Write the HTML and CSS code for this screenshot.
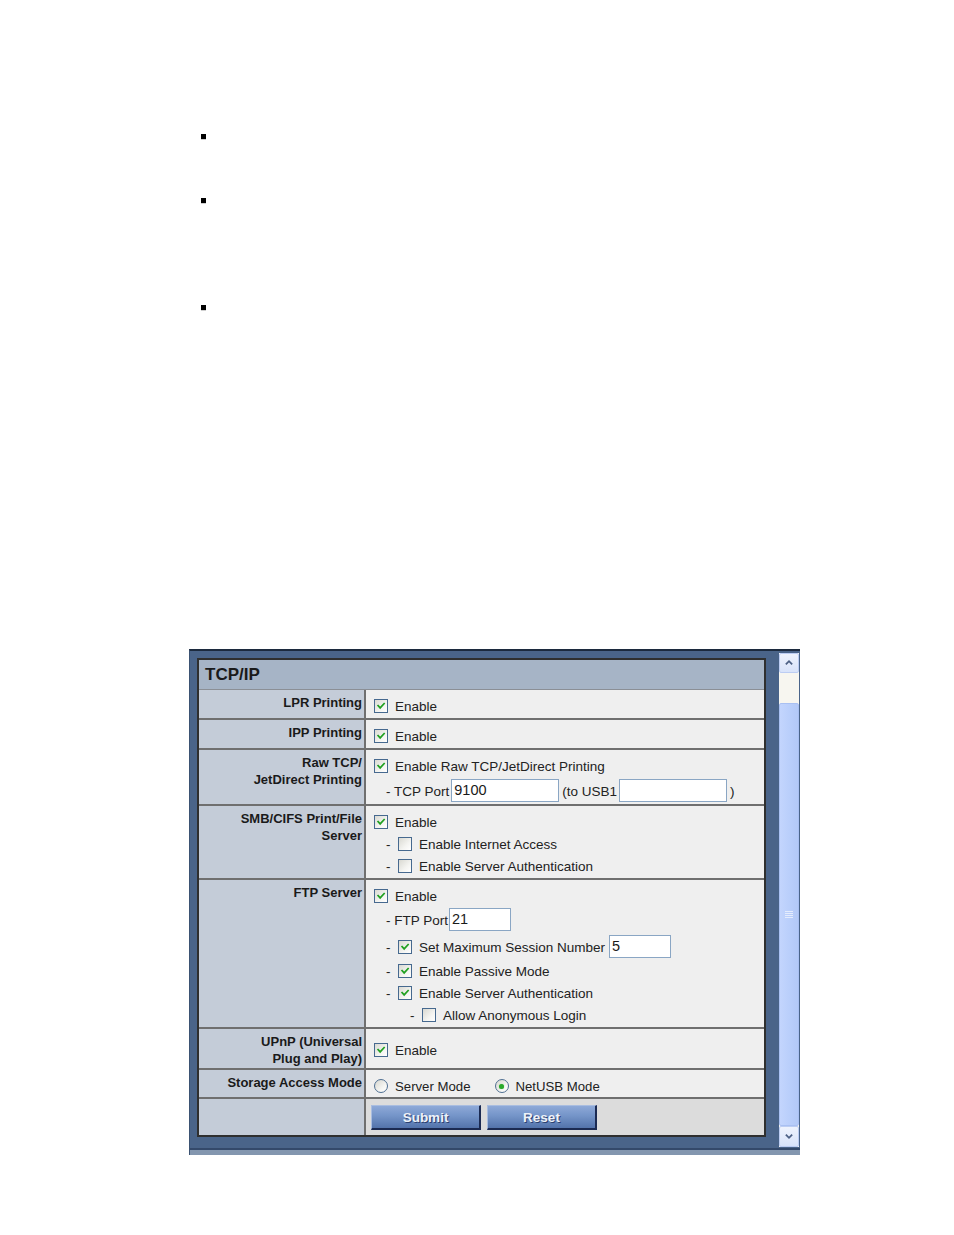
FILE: index.html
```html
<!DOCTYPE html>
<html>
<head>
<meta charset="utf-8">
<title>TCP/IP</title>
<link rel="stylesheet" href="styles.css">
</head>
<body>
<ul class="notes">
  <li class="dot"></li>
  <li class="dot d2"></li>
  <li class="dot d3"></li>
</ul>

<div class="frame">
  <div class="frame-body">
    <div class="panel">
      <div class="tbl">
        <div class="hdr">TCP/IP</div>

        <div class="lbl">LPR Printing</div>
        <div class="val">
          <div class="line"><span class="cb"><svg viewBox="0 0 14 14"><path d="M3.6 6.6 L6 9.2 L10.6 4.2"/></svg></span><span class="t">Enable</span></div>
        </div>

        <div class="lbl">IPP Printing</div>
        <div class="val">
          <div class="line"><span class="cb"><svg viewBox="0 0 14 14"><path d="M3.6 6.6 L6 9.2 L10.6 4.2"/></svg></span><span class="t">Enable</span></div>
        </div>

        <div class="lbl">Raw TCP/<br>JetDirect Printing</div>
        <div class="val">
          <div class="line"><span class="cb"><svg viewBox="0 0 14 14"><path d="M3.6 6.6 L6 9.2 L10.6 4.2"/></svg></span><span class="t">Enable Raw TCP/JetDirect Printing</span></div>
          <div class="line sub mt3"><span class="txt">- TCP Port</span><input class="fld w108" type="text" value="9100"><span class="txt after">(to USB1</span><input class="fld w108" type="text" value=""><span class="txt after">)</span></div>
        </div>

        <div class="lbl">SMB/CIFS Print/File<br>Server</div>
        <div class="val">
          <div class="line"><span class="cb"><svg viewBox="0 0 14 14"><path d="M3.6 6.6 L6 9.2 L10.6 4.2"/></svg></span><span class="t">Enable</span></div>
          <div class="line sub"><span class="dash">-</span><span class="cb off"></span><span class="t">Enable Internet Access</span></div>
          <div class="line sub"><span class="dash">-</span><span class="cb off"></span><span class="t">Enable Server Authentication</span></div>
        </div>

        <div class="lbl">FTP Server</div>
        <div class="val">
          <div class="line"><span class="cb"><svg viewBox="0 0 14 14"><path d="M3.6 6.6 L6 9.2 L10.6 4.2"/></svg></span><span class="t">Enable</span></div>
          <div class="line sub mt2"><span class="txt">- FTP Port</span><input class="fld w62 tight" type="text" value="21"></div>
          <div class="line sub mt5"><span class="dash">-</span><span class="cb"><svg viewBox="0 0 14 14"><path d="M3.6 6.6 L6 9.2 L10.6 4.2"/></svg></span><span class="t">Set Maximum Session Number</span><input class="fld w62 wide" type="text" value="5"></div>
          <div class="line sub mt2"><span class="dash">-</span><span class="cb"><svg viewBox="0 0 14 14"><path d="M3.6 6.6 L6 9.2 L10.6 4.2"/></svg></span><span class="t">Enable Passive Mode</span></div>
          <div class="line sub"><span class="dash">-</span><span class="cb"><svg viewBox="0 0 14 14"><path d="M3.6 6.6 L6 9.2 L10.6 4.2"/></svg></span><span class="t">Enable Server Authentication</span></div>
          <div class="line subsub"><span class="dash">-</span><span class="cb off"></span><span class="t">Allow Anonymous Login</span></div>
        </div>

        <div class="lbl">UPnP (Universal<br>Plug and Play)</div>
        <div class="val mid">
          <div class="line"><span class="cb"><svg viewBox="0 0 14 14"><path d="M3.6 6.6 L6 9.2 L10.6 4.2"/></svg></span><span class="t">Enable</span></div>
        </div>

        <div class="lbl">Storage Access Mode</div>
        <div class="val">
          <div class="line radios"><span class="rb"></span><span class="t">Server Mode</span><span class="rb on second"><span class="pip"></span></span><span class="t">NetUSB Mode</span></div>
        </div>

        <div class="lbl last"></div>
        <div class="val last btns">
          <button class="btn" type="button">Submit</button>
          <button class="btn" type="button">Reset</button>
        </div>
      </div>
    </div>

    <div class="scrollbar">
      <div class="sb-btn"><svg viewBox="0 0 20 20"><path d="M6.5 11.5 L10 8 L13.5 11.5"/></svg></div>
      <div class="sb-track"></div>
      <div class="sb-thumb"><svg class="grip" viewBox="0 0 8 7"><path d="M0 0.5 H8 M0 2.5 H8 M0 4.5 H8 M0 6.5 H8"/></svg></div>
      <div class="sb-btn down"><svg viewBox="0 0 20 20"><path d="M6.5 8.5 L10 12 L13.5 8.5"/></svg></div>
    </div>
  </div>
  <div class="frame-foot"></div>
</div>
</body>
</html>
```

FILE: styles.css
```css
html, body {
  margin: 0;
  padding: 0;
  background: #ffffff;
}

body {
  font-family: "Liberation Sans", Arial, sans-serif;
  color: #1e1e1e;
}

/* top bullet markers */
.notes {
  list-style: none;
  margin: 0;
  padding: 134px 0 0 201px;
}

.dot {
  width: 5px;
  height: 5px;
  background: #000;
  box-shadow: 0 1px 0 #cfcfcf;
}

.d2 { margin-top: 59px; }
.d3 { margin-top: 102px; }

/* framed panel */
.frame {
  margin: 339px 0 0 189px;
  width: 611px;
  box-sizing: border-box;
  border-top: 2px solid #1c2a3e;
  border-left: 1px solid #3b5272;
  background: #4a6489;
  display: flex;
  flex-direction: column;
}

.frame-body {
  display: flex;
  align-items: flex-start;
}

.panel {
  padding: 7px 0 11px 7px;
}

.frame-foot {
  height: 5px;
  border-top: 2px solid #34496a;
  background: #8396af;
}

.tbl {
  width: 569px;
  box-sizing: border-box;
  border: 2px solid #2f2f2f;
  display: grid;
  grid-template-columns: 167px 398px;
  grid-template-rows: 30px 30px 30px 56px 74px 149px 41px 29px 36px;
}

.hdr {
  grid-column: 1 / span 2;
  background: #a6b4c6;
  border-bottom: 1px solid #8b8f96;
  font-weight: bold;
  font-size: 17px;
  padding-left: 6px;
  display: flex;
  align-items: center;
  color: #1a1a1a;
}

.lbl {
  background: #c4ccd8;
  border-right: 2px solid #6f6f6f;
  border-bottom: 2px solid #6f6f6f;
  text-align: right;
  font-weight: bold;
  font-size: 13px;
  line-height: 17px;
  padding: 4px 2px 0 0;
  color: #1a1a1a;
}

.val {
  background: #efefef;
  border-bottom: 2px solid #6f6f6f;
  padding: 5px 0 0 8px;
  font-size: 13.5px;
}

.lbl, .val { box-sizing: border-box; }

.last { border-bottom: none; }

.val.mid {
  padding-top: 3px;
  display: flex;
  align-items: center;
}

.line {
  height: 22px;
  display: flex;
  align-items: center;
  white-space: nowrap;
  color: #222;
}

.radios { font-size: 13.2px; }

.mt2 { margin-top: 2px; }
.mt3 { margin-top: 3px; }
.mt5 { margin-top: 5px; }

.sub { margin-left: 12px; }
.subsub { margin-left: 36px; }

.dash {
  display: inline-block;
  width: 12px;
}

.t { margin-left: 7px; }
.after { margin-left: 3px; }

/* checkbox */
.cb {
  width: 14px;
  height: 14px;
  box-sizing: border-box;
  border: 1px solid #46698f;
  background: linear-gradient(135deg, #d9d9d2 0%, #f4f4f1 60%, #ffffff 100%);
  display: inline-block;
  flex: none;
}

.cb svg {
  display: block;
  width: 12px;
  height: 12px;
}

.cb path {
  fill: none;
  stroke: #21a121;
  stroke-width: 2;
  stroke-linecap: square;
}

/* radio */
.rb {
  width: 14px;
  height: 14px;
  box-sizing: border-box;
  border: 1px solid #4f6f92;
  border-radius: 50%;
  background: linear-gradient(135deg, #d6d6cf 0%, #f6f6f3 65%, #ffffff 100%);
  display: inline-flex;
  align-items: center;
  justify-content: center;
  flex: none;
}

.rb.second { margin-left: 24px; }

.pip {
  width: 5px;
  height: 5px;
  border-radius: 50%;
  background: #2aa82a;
  box-shadow: 0 0 1px #6ccc6c;
}

/* text inputs */
.fld {
  height: 23px;
  box-sizing: border-box;
  border: 1px solid #8aa6c4;
  background: #fff;
  font-family: "Liberation Sans", Arial, sans-serif;
  font-size: 14.5px;
  color: #1a1a1a;
  padding: 0 2px;
  margin: -2px 0 0 2px;
  outline: none;
}

.w108 { width: 108px; }
.w62 { width: 62px; }
.tight { margin-left: 1px; }
.wide { margin-left: 4px; }

/* buttons */
.btns {
  background: #dcdcdc;
  padding: 6px 0 0 5px;
  display: flex;
  gap: 6px;
  align-items: flex-start;
}

.btn {
  width: 110px;
  height: 25px;
  box-sizing: border-box;
  margin: 0;
  padding: 0;
  border-top: 1px solid #a9bde0;
  border-left: 1px solid #a9bde0;
  border-right: 2px solid #1b2a52;
  border-bottom: 2px solid #1b2a52;
  background: linear-gradient(180deg, #8ea9d8 0%, #7494c8 45%, #5373ab 100%);
  color: #eef2f9;
  font-family: "Liberation Sans", Arial, sans-serif;
  font-weight: bold;
  font-size: 13.5px;
  text-shadow: 1px 1px 0 #2c4170;
}

/* scrollbar */
.scrollbar {
  width: 20px;
  height: 494px;
  margin: 2px 1px 0 13px;
  display: flex;
  flex-direction: column;
  background: #f6f5ef;
}

.sb-btn {
  height: 20px;
  box-sizing: border-box;
  border: 1px solid #bccdf3;
  border-radius: 2px;
  background: linear-gradient(180deg, #eef3fd 0%, #d8e3fa 100%);
}

.sb-btn.down { height: 21px; }

.sb-btn svg {
  display: block;
  width: 18px;
  height: 18px;
}

.sb-btn path {
  fill: none;
  stroke: #4d6185;
  stroke-width: 2;
}

.sb-track {
  height: 30px;
  background: #f7f6f0;
}

.sb-thumb {
  height: 423px;
  box-sizing: border-box;
  border: 1px solid #a9c0f2;
  border-radius: 2px;
  background: linear-gradient(90deg, #c3d5fd 0%, #bacffb 50%, #b3c9f7 100%);
  display: flex;
  align-items: center;
  justify-content: center;
}

.grip {
  width: 8px;
  height: 7px;
}

.grip path {
  stroke: #e4ecfd;
  stroke-width: 1;
}
```
